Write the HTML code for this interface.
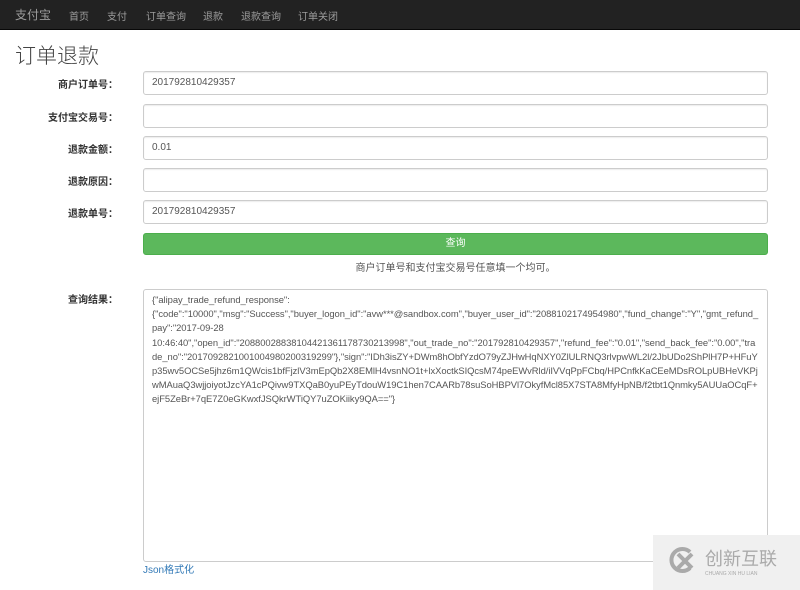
<!DOCTYPE html>
<html><head><meta charset="utf-8"><style>
*{box-sizing:border-box}
body{margin:0;width:800px;height:590px;background:#fff;font-family:"Liberation Sans","Noto Sans CJK SC",sans-serif;font-size:10px;color:#333;position:relative;overflow:hidden}
.nav{position:absolute;left:0;top:0;width:800px;height:30px;background:#222;border-bottom:1px solid #080808}
.nav span{position:absolute;top:8px;color:#9d9d9d;font-size:10px}
.nav .brand{font-size:12px;top:6px}
h1{position:absolute;left:15px;top:40px;margin:0;font-size:21px;font-weight:300;color:#444;font-family:"Noto Sans CJK SC",sans-serif}
.lbl{position:absolute;width:118px;text-align:right;font-weight:bold;font-size:10px}
.inp{position:absolute;left:143px;width:625px;height:24px;border:1px solid #ccc;border-radius:3px;padding:5px 8px;font-size:10px;color:#555;box-shadow:inset 0 1px 1px rgba(0,0,0,.075)}
.btn{position:absolute;left:143px;top:233px;width:625px;height:22px;background:#5cb85c;border:1px solid #4cae4c;border-radius:3px;color:#fff;text-align:center;line-height:20px;font-size:10px}
.ta{position:absolute;left:143px;top:289px;width:625px;height:273px;border:1px solid #ccc;border-radius:3px;padding:3px 8px;font-size:9.4px;line-height:14.2px;color:#555;word-break:break-all;letter-spacing:-0.04px}
</style></head><body>
<div class="nav"><span class="brand" style="left:15px">支付宝</span><span style="left:69px">首页</span><span style="left:107px">支付</span><span style="left:146px">订单查询</span><span style="left:203px">退款</span><span style="left:241px">退款查询</span><span style="left:298px">订单关闭</span></div>
<h1>订单退款</h1>
<div class="lbl" style="top:76px">商户订单号：</div><div class="inp" style="top:71px">201792810429357</div>
<div class="lbl" style="top:109px">支付宝交易号：</div><div class="inp" style="top:104px"></div>
<div class="lbl" style="top:141px">退款金额：</div><div class="inp" style="top:136px">0.01</div>
<div class="lbl" style="top:173px">退款原因：</div><div class="inp" style="top:168px"></div>
<div class="lbl" style="top:205px">退款单号：</div><div class="inp" style="top:200px">201792810429357</div>
<div class="btn">查询</div>
<div style="position:absolute;left:143px;width:625px;top:259px;text-align:center;color:#555">商户订单号和支付宝交易号任意填一个均可。</div>
<div class="lbl" style="top:291px">查询结果：</div>
<div class="ta">{"alipay_trade_refund_response":<br>{"code":"10000","msg":"Success","buyer_logon_id":"avw***@sandbox.com","buyer_user_id":"2088102174954980","fund_change":"Y","gmt_refund_pay":"2017-09-28<br>10:46:40","open_id":"20880028838104421361178730213998","out_trade_no":"201792810429357","refund_fee":"0.01","send_back_fee":"0.00","trade_no":"2017092821001004980200319299"},"sign":"IDh3isZY+DWm8hObfYzdO79yZJHwHqNXY0ZlULRNQ3rlvpwWL2l/2JbUDo2ShPlH7P+HFuYp35wv5OCSe5jhz6m1QWcis1bfFjzlV3mEpQb2X8EMlH4vsnNO1t+lxXoctkSIQcsM74peEWvRld/iIVVqPpFCbq/HPCnfkKaCEeMDsROLpUBHeVKPjwMAuaQ3wjjoiyotJzcYA1cPQivw9TXQaB0yuPEyTdouW19C1hen7CAARb78suSoHBPVl7OkyfMcl85X7STA8MfyHpNB/f2tbt1Qnmky5AUUaOCqF+ejF5ZeBr+7qE7Z0eGKwxfJSQkrWTiQY7uZOKiiky9QA=="}</div>
<div style="position:absolute;left:143px;top:561px;color:#337ab7">Json格式化</div>
<div style="position:absolute;left:653px;top:535px;width:147px;height:55px;background:#f0f0f0"></div>
<svg style="position:absolute;left:668px;top:546px" width="30" height="28" viewBox="0 0 30 28"><path d="M22 6A11 11 0 1 0 22 22" fill="none" stroke="#aaa" stroke-width="4"/><path d="M10 8L24 22M24 8L10 22" stroke="#aaa" stroke-width="4"/></svg>
<div style="position:absolute;left:705px;top:548px;font-size:18px;color:#aaa;font-family:'Noto Sans CJK SC',sans-serif;line-height:20px">创新互联</div>
<div style="position:absolute;left:705px;top:571px;font-size:5px;color:#aaa">CHUANG XIN HU LIAN</div>
</body></html>
